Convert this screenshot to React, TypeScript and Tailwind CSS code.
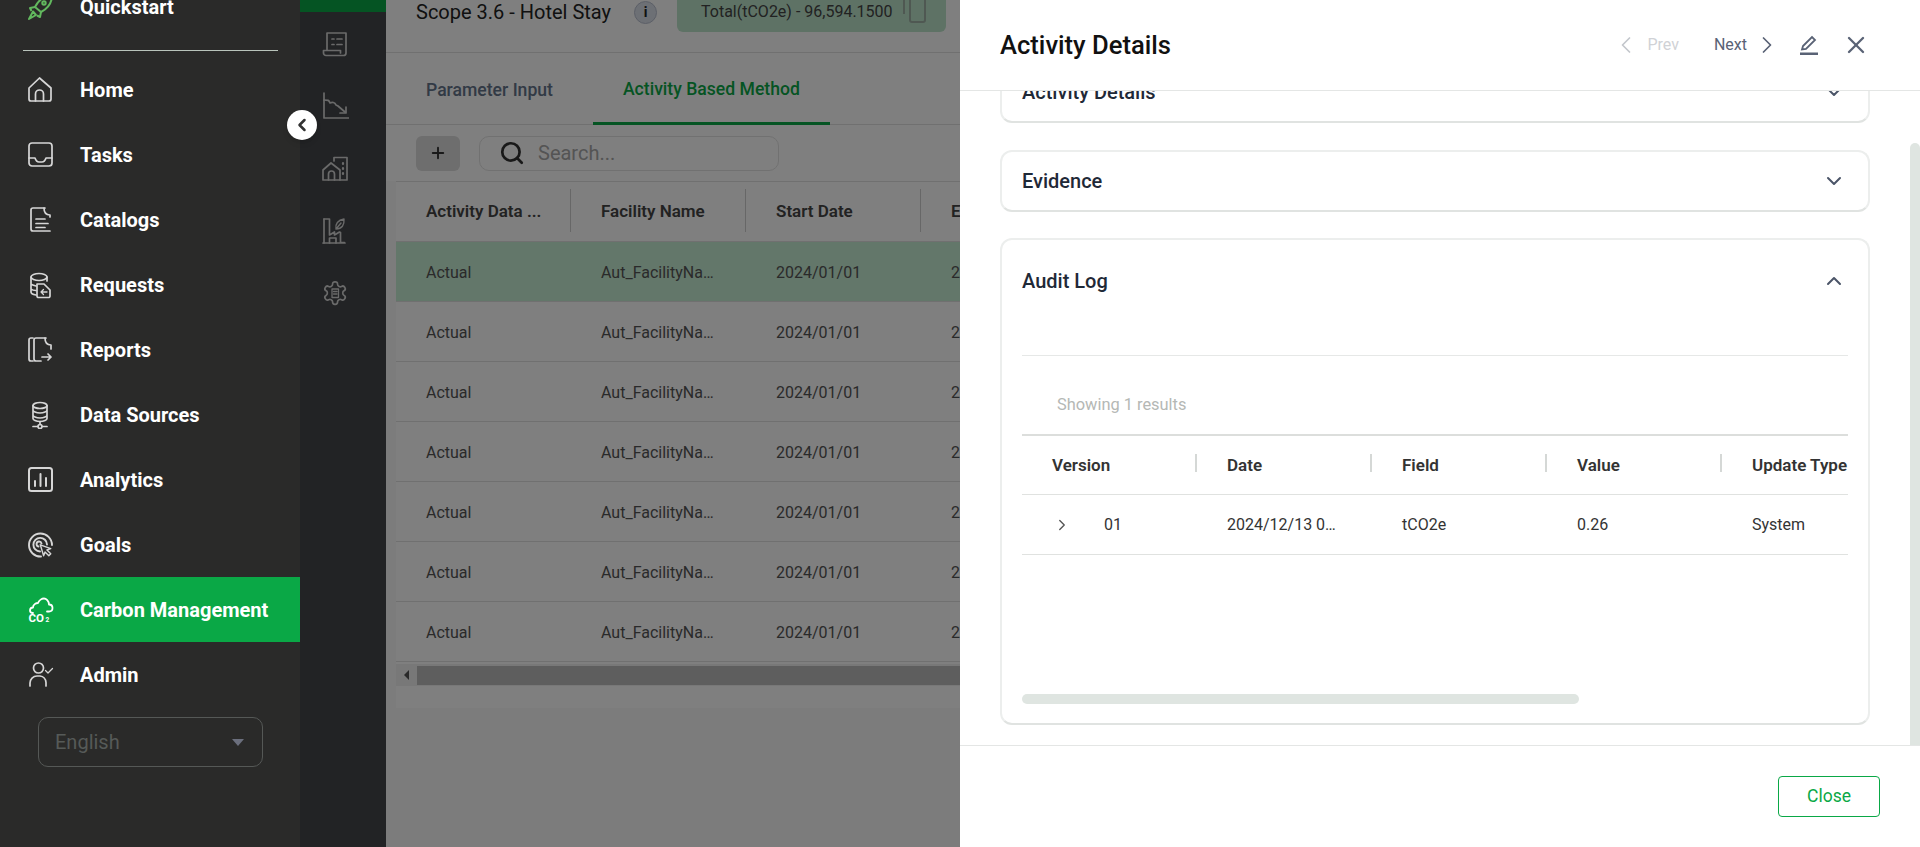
import { ChevronDown, ChevronLeft, ChevronRight, ChevronUp, Plus, Search, X } from 'lucide-react';
import type { ReactNode } from 'react';

const Ico = ({ children, className = '' }: { children: ReactNode; className?: string }) => (
  <svg
    viewBox="0 0 28 28"
    fill="none"
    stroke="currentColor"
    strokeWidth="1.7"
    strokeLinecap="round"
    strokeLinejoin="round"
    className={`w-7 h-7 shrink-0 ${className}`}
  >
    {children}
  </svg>
);

const NAV_ITEMS: { label: string; icon: ReactNode; active?: boolean }[] = [
  {
    label: 'Home',
    icon: (
      <>
        <path d="M3 12 13.5 2 25 12v11a2 2 0 0 1-2 2H5a2 2 0 0 1-2-2Z" />
        <path d="M9.5 25v-7a4 4 0 0 1 8 0v7" />
      </>
    ),
  },
  {
    label: 'Tasks',
    icon: (
      <>
        <rect x="3" y="2" width="23" height="23" rx="3" />
        <path d="M3 17h6c1 3 2 4 4 4h3c2 0 3-1 4-4h6" />
      </>
    ),
  },
  {
    label: 'Catalogs',
    icon: (
      <>
        <path d="M19 2H7a2 2 0 0 0-2 2v19a2 2 0 0 0 2 2h17" />
        <path d="M18 2c0 4 2 7 6 7v2" />
        <path d="M10 13h9M10 17.5h12M10 21.5h9" />
      </>
    ),
  },
  {
    label: 'Requests',
    icon: (
      <>
        <path d="M5 6c0-2 4-3.500 8-3.500s8 1.500 8 3.500-4 3.500-8 3.500S5 8 5 6Z" />
        <path d="M5 6v15c0 1.500 2 2.500 5 3M21 6v4M5 13c1 1 3 1.500 5 2M5 18c1 1 3 1.500 5 1.500" />
        <path d="M11 13h7l6 6v6a1.500 1.500 0 0 1-1.500 1.500h-10A1.500 1.500 0 0 1 11 25Z" />
        <path d="M21 21h-6m2.500-2.500L15 21l2.500 2.500" strokeWidth="1.300" />
      </>
    ),
  },
  {
    label: 'Reports',
    icon: (
      <>
        <path d="M7 2H5a2 2 0 0 0-2 2v19a2 2 0 0 0 2 2h2" />
        <path d="M20 2H10a2 2 0 0 0-2 2v19a2 2 0 0 0 2 2h5" />
        <path d="M19 2c0 4 2 7 6 7v4" />
        <path d="M16 21h9m-3-3 3 3-3 3" />
      </>
    ),
  },
  {
    label: 'Data Sources',
    icon: (
      <>
        <ellipse cx="14" cy="4.500" rx="7" ry="3" />
        <path d="M7 4.500v13c0 1.500 3 3 7 3s7-1.500 7-3v-13M7 9c0 1.500 3 3 7 3s7-1.500 7-3M7 14c0 1.500 3 3 7 3s7-1.500 7-3" />
        <path d="M14 20.500v3M7 25.500h5M16 25.500h5" />
        <circle cx="14" cy="25.500" r="2" />
      </>
    ),
  },
  {
    label: 'Analytics',
    icon: (
      <>
        <rect x="3" y="2" width="23" height="23" rx="2.500" strokeWidth="2" />
        <path d="M9 20v-5M14.500 20V8M20 20v-8" strokeWidth="2" />
      </>
    ),
  },
  {
    label: 'Goals',
    icon: (
      <>
        <path d="M15 25.500A11.500 11.500 0 1 1 26 14" strokeWidth="1.900" />
        <path d="M14 20.500A6.800 6.800 0 1 1 21 13.500" strokeWidth="1.900" />
        <path d="M12.500 15.500a2.500 2.500 0 1 1 3-3" strokeWidth="1.900" />
        <path d="m14 14 11 4-4 1.500 4 4-2 2-4-4-1.500 4Z" strokeWidth="1.500" fill="#2a2a29" transform="translate(1 0.500) scale(.95)" />
      </>
    ),
  },
  {
    label: 'Carbon Management',
    active: true,
    icon: (
      <>
        <path d="M7 17c-2 0-3-1-3-2.500S5 11.500 7 11.500C7 8.500 10 7 12 7c1-3 4-4.500 6-4.500S23 5 23 8.500c2 0 3.500 1.500 3.500 3.500s-1.500 3.500-3.500 3.500h-2" strokeWidth="1.800" />
        <text x="2.500" y="26" fontSize="11.500" fontWeight="700" fill="currentColor" stroke="none" fontFamily="Roboto, sans-serif">
          CO
        </text>
        <text x="19.500" y="26" fontSize="6.500" fontWeight="700" fill="currentColor" stroke="none" fontFamily="Roboto, sans-serif">
          2
        </text>
      </>
    ),
  },
  {
    label: 'Admin',
    icon: (
      <>
        <circle cx="12.500" cy="7" r="5" />
        <path d="M4 25v-3a7 7 0 0 1 7-7h3a7 7 0 0 1 6 6.500V25" />
        <path d="m19.500 9.500 2.500 2.500 4.500-4.500" strokeWidth="1.300" />
      </>
    ),
  },
];

const RAIL_ICONS: ReactNode[] = [
  <>
    <path d="M6 21V4h19v20a2.500 2.500 0 0 1-2.500 2.500H5a2.500 2.500 0 0 1-2.500-2.500v-2.500h17v2.500" />
    <path d="M11 10h2M16 10h5M11 15.500h2M16 15.500h5" />
  </>,
  <>
    <path d="M3 1v25h26" />
    <path d="M3 8c4 0 5 0 6 3 2-1 5-1 6 2l2 1 7 6" />
    <path d="M25 15v6h-6" />
  </>,
  <>
    <path d="M2 26V16l8-7 9 7v10H2Z" />
    <path d="M7.500 26v-6a3 3 0 0 1 6 0v6" />
    <path d="M13 7V3.500h13V26h-7" />
    <path d="M22 9v1M22 14v1M22 19v1" strokeWidth="2.200" />
  </>,
  <>
    <path d="M3 2h5.500v16l5-3v3l5-3 1 .5v10h4V26M2 26h22" />
    <path d="M3 2v24M8.500 26v-5h6.500v5" />
    <path d="M15 12c-1-5 2-9 8-10 .5 6-2 10-8 10Zm0 0 5-6" strokeWidth="1.400" />
  </>,
  <>
    <path
      transform="scale(1.125) translate(0.500 0.500)"
      strokeWidth="1.500"
      d="M12.220 2h-.44a2 2 0 0 0-2 2v.18a2 2 0 0 1-1 1.730l-.43.25a2 2 0 0 1-2 0l-.15-.08a2 2 0 0 0-2.730.73l-.22.38a2 2 0 0 0 .73 2.730l.15.1a2 2 0 0 1 1 1.720v.51a2 2 0 0 1-1 1.740l-.15.09a2 2 0 0 0-.73 2.730l.22.38a2 2 0 0 0 2.730.73l.15-.08a2 2 0 0 1 2 0l.43.25a2 2 0 0 1 1 1.730V20a2 2 0 0 0 2 2h.44a2 2 0 0 0 2-2v-.18a2 2 0 0 1 1-1.730l.43-.25a2 2 0 0 1 2 0l.15.08a2 2 0 0 0 2.730-.73l.22-.39a2 2 0 0 0-.73-2.730l-.15-.08a2 2 0 0 1-1-1.740v-.5a2 2 0 0 1 1-1.740l.15-.09a2 2 0 0 0 .73-2.730l-.22-.38a2 2 0 0 0-2.730-.73l-.15.08a2 2 0 0 1-2 0l-.43-.25a2 2 0 0 1-1-1.730V4a2 2 0 0 0-2-2z"
    />
    <path d="M11 10h6.500v8.500H11ZM12.500 12.500h3.500M12.500 15h3.500" strokeWidth="1.300" />
  </>,
];

const COLUMNS = ['Activity Data ...', 'Facility Name', 'Start Date', 'End Date'];
const ROWS = Array.from({ length: 7 }, (_, i) => i);
const AUDIT_COLUMNS = ['Version', 'Date', 'Field', 'Value', 'Update Type'];

const Sidebar = () => (
  <aside className="relative z-20 w-[300px] shrink-0 h-full bg-[#2a2a29] flex flex-col overflow-hidden">
    <div className="h-[65px] -mt-[26px] shrink-0 flex items-center pl-[26px] gap-[26px]">
      <svg viewBox="0 0 28 28" fill="none" stroke="#62b85e" strokeWidth="2" strokeLinejoin="round" className="w-7 h-7 shrink-0">
        <path d="M9 14C12 8 18 3 26 2c0 8-5 14-11 17Z" />
        <path d="M9 14l-5 1 1.500 3M15 19l-1 5-3-1.500" />
        <path d="M7 18.500 3 26l7-4Z" />
        <circle cx="18" cy="10" r="1.700" />
      </svg>
      <span className="text-[20px] font-bold text-white">Quickstart</span>
    </div>
    <div className="h-px bg-[#b9c4bb] mx-[23px] w-[255px] mt-[11px] mb-[6px] shrink-0" />
    <nav className="flex flex-col">
      {NAV_ITEMS.map((item) => (
        <div
          key={item.label}
          className={`h-[65px] flex items-center pl-[26px] gap-[26px] ${
            item.active ? 'bg-[#0aa846] text-white' : 'text-[#d6d6d6]'
          }`}
        >
          <Ico>{item.icon}</Ico>
          <span className="text-[20px] font-bold text-white">{item.label}</span>
        </div>
      ))}
    </nav>
    <div className="mx-[38px] mt-[10px] h-[50px] w-[225px] rounded-[10px] border border-[#555856] flex items-center justify-between pl-4 pr-[18px]">
      <span className="text-[20px] text-[#565a58]">English</span>
      <span className="w-0 h-0 border-x-[6.5px] border-x-transparent border-t-[7px] border-t-[#6b6f7d]" />
    </div>
  </aside>
);

const MainContent = () => (
  <>
    <div className="w-[86px] shrink-0 h-full bg-[#44464a] flex flex-col text-[#d4d4d4]">
      <div className="h-3 bg-[#0aa846] shrink-0" />
      {RAIL_ICONS.map((icon, i) => (
        <div key={i} className="h-[62.5px] shrink-0 flex items-center pl-[21px]">
          <Ico>{icon}</Ico>
        </div>
      ))}
    </div>
    <main className="flex-1 min-w-0 h-full flex flex-col bg-[#f8f8f8] overflow-hidden">
      <div className="h-[81px] -mt-[28px] shrink-0 bg-white border-b border-[#e0e0e0] flex items-center pl-[30px]">
        <span className="text-[20px] text-[#222]">Scope 3.6 - Hotel Stay</span>
        <span className="ml-[23px] w-[23px] h-[23px] rounded-full bg-[#dbe0ea] border border-[#b8bfcf] flex items-center justify-center text-[14px] font-bold text-[#222]">
          i
        </span>
        <div className="ml-[20px] h-10 w-[269px] rounded-b-[6px] bg-[#bde5cb] flex items-center pl-6 gap-[10px] overflow-hidden">
          <span className="text-[16px] text-[#444]">Total(tCO2e) - 96,594.1500</span>
          <svg viewBox="0 0 24 32" fill="none" stroke="#9fb0a5" strokeWidth="2" className="w-6 h-8 -mt-[8px]">
            <path d="M1 22V1h12" />
            <rect x="7" y="6" width="15" height="24" rx="2" />
          </svg>
        </div>
      </div>
      <div className="h-[72px] shrink-0 bg-white border-b border-[#e0e0e0] flex pl-[10px]">
        <div className="px-[30px] pt-[3px] flex items-center text-[17.6px] font-medium text-[#64748b]">Parameter Input</div>
        <div className="ml-[10px] px-[30px] pt-[3px] flex items-center text-[17.6px] font-medium text-[#0aa846] border-b-[3px] border-[#0aa846] h-[72px]">
          Activity Based Method
        </div>
      </div>
      <div className="h-[56px] shrink-0 bg-white pl-[30px] flex items-center gap-[19px]">
        <button className="w-11 h-[35px] rounded-[6px] bg-[#dcdcdc] flex items-center justify-center text-[#333]">
          <Plus size={18} strokeWidth={2.500} />
        </button>
        <div className="w-[300px] h-[35px] rounded-[10px] border border-[#e2e2e2] flex items-center pl-[19px] gap-[13px]">
          <Search size={26} strokeWidth={2.500} className="text-[#333]" />
          <span className="text-[20px] text-[#a8a8a8]">Search...</span>
        </div>
      </div>
      <div className="ml-[10px] bg-white shrink-0">
        <div className="h-[61px] border-y border-[#e0e0e0] flex items-center whitespace-nowrap">
          {COLUMNS.map((c) => (
            <div key={c} className="relative w-[175px] shrink-0 pl-[30px] text-[17px] font-semibold text-[#444]">
              {c}
              <span className="absolute right-[0px] -top-[10px] h-[43px] w-px bg-[#cfcfcf]" />
            </div>
          ))}
        </div>
        {ROWS.map((r) => (
          <div
            key={r}
            className={`h-[60px] pt-[3px] flex items-center border-b border-[#e0e0e0] text-[16px] text-[#555] whitespace-nowrap ${
              r === 0 ? 'bg-[#c6eed4]' : ''
            }`}
          >
            <div className="w-[175px] shrink-0 pl-[30px]">Actual</div>
            <div className="w-[175px] shrink-0 pl-[30px]">Aut_FacilityNa…</div>
            <div className="w-[175px] shrink-0 pl-[30px]">2024/01/01</div>
            <div className="w-[175px] shrink-0 pl-[30px]">2024/12/31</div>
          </div>
        ))}
        <div className="h-[22px] mt-[2px] bg-[#f1f1f1] flex items-center">
          <div className="w-[21px] flex justify-center">
            <span className="w-0 h-0 border-y-[5px] border-y-transparent border-r-[5px] border-r-[#555]" />
          </div>
          <div className="flex-1 h-[19px] bg-[#bcbcbc]" />
        </div>
        <div className="h-[22px]" />
      </div>
    </main>
  </>
);

const Card = ({ title, open, children }: { title: string; open?: boolean; children?: ReactNode }) => (
  <section className={`rounded-[12px] border-2 border-[#eceeed] border-b-[#e0e3e1] bg-white ${open ? '-mt-[1px]' : ''}`}>
    <div className={`flex items-center justify-between pl-[20px] pr-[22px] ${open ? 'h-[81px]' : 'h-[58px]'}`}>
      <h3 className="text-[20px] font-medium text-[#1f2937]">{title}</h3>
      {open ? (
        <ChevronUp size={24} strokeWidth={2} className="text-[#4b5568]" />
      ) : (
        <ChevronDown size={24} strokeWidth={2} className="text-[#4b5568]" />
      )}
    </div>
    {children}
  </section>
);

const AuditTable = () => (
  <div className="mx-[20px]">
    <div className="h-[35px] border-b border-[#e6e8e7]" />
    <div className="h-[78px] flex items-center pl-[35px] pt-[20px] text-[16.4px] text-[#b5b8b5]">Showing 1 results</div>
    <div className="overflow-hidden">
      <div className="w-[900px] border-t-2 border-[#dcdedc]">
        <div className="h-[59px] pt-[2px] flex items-center border-b border-[#e0e2e0] whitespace-nowrap">
          {AUDIT_COLUMNS.map((c) => (
            <div key={c} className="relative w-[175px] shrink-0 pl-[30px] text-[17px] font-semibold text-[#333]">
              {c}
              {c !== 'Update Type' && <span className="absolute right-[0px] top-[1px] h-[18px] w-[2px] bg-[#d5d8d6]" />}
            </div>
          ))}
        </div>
        <div className="h-[60px] flex items-center border-b border-[#e0e2e0] text-[16px] text-[#333] whitespace-nowrap">
          <div className="w-[175px] shrink-0 pl-[30px] flex items-center gap-[33px]">
            <ChevronRight size={18} strokeWidth={1.800} className="ml-[1px] text-[#555]" />
            <span>01</span>
          </div>
          <div className="w-[175px] shrink-0 pl-[30px]">2024/12/13 0…</div>
          <div className="w-[175px] shrink-0 pl-[30px]">tCO2e</div>
          <div className="w-[175px] shrink-0 pl-[30px]">0.26</div>
          <div className="w-[175px] shrink-0 pl-[30px]">System</div>
        </div>
      </div>
    </div>
    <div className="mt-[139px] mb-[19px] h-[10px] w-[557px] rounded-full bg-[#dfe5e1]" />
  </div>
);

const Drawer = () => (
  <div className="absolute z-20 inset-y-0 right-0 w-[960px] bg-white flex flex-col">
    <header className="h-[91px] shrink-0 border-b border-[#e4e6e5] flex items-center justify-between pl-[40px] pr-[54px] relative z-10 bg-white">
      <h2 className="text-[25.6px] font-medium text-[#111]">Activity Details</h2>
      <div className="flex items-center">
        <ChevronLeft size={28} strokeWidth={1.500} className="text-[#c4c7cc]" />
        <span className="ml-[7px] text-[16px] text-[#d0d2d6]">Prev</span>
        <span className="ml-[35px] text-[16px] text-[#596275]">Next</span>
        <ChevronRight size={28} strokeWidth={1.500} className="ml-[6px] text-[#596275]" />
        <svg viewBox="0 0 20 20" fill="none" stroke="#596275" strokeWidth="1.800" className="ml-[18px] w-5 h-5">
          <path d="M3 14.500 4 11l9-9 3 3-9 9Z" />
          <path d="M1 18.800h18" strokeWidth="2.600" />
        </svg>
        <X size={28} strokeWidth={2} className="ml-[23px] -mr-[4px] text-[#596275]" />
      </div>
    </header>
    <div className="relative flex-1 min-h-0 overflow-hidden">
      <div className="absolute right-0 top-[52px] bottom-0 w-[10px] rounded-t-full bg-[#dfe5e1]" />
      <div className="-mt-[30px] ml-[40px] w-[870px] flex flex-col gap-[27px]">
        <Card title="Activity Details" />
        <Card title="Evidence" />
        <Card title="Audit Log" open>
          <AuditTable />
        </Card>
      </div>
    </div>
    <footer className="h-[102px] shrink-0 border-t border-[#e4e6e5] flex justify-end pt-[30px] pr-[40px]">
      <button className="w-[102px] h-[41px] rounded-[4px] border border-[#0aa846] text-[17.5px] text-[#0aa846]">Close</button>
    </footer>
  </div>
);

export default function App() {
  return (
    <div className="relative flex h-[847px] w-full overflow-hidden font-[Roboto,sans-serif] bg-white">
      <Sidebar />
      <MainContent />
      <div className="absolute z-10 inset-y-0 left-[300px] right-0 bg-black/50" />
      <Drawer />
      <button className="absolute z-30 left-[287px] top-[110px] w-[30px] h-[30px] rounded-full bg-white shadow-md flex items-center justify-center text-[#333]">
        <ChevronLeft size={20} strokeWidth={3} />
      </button>
    </div>
  );
}
